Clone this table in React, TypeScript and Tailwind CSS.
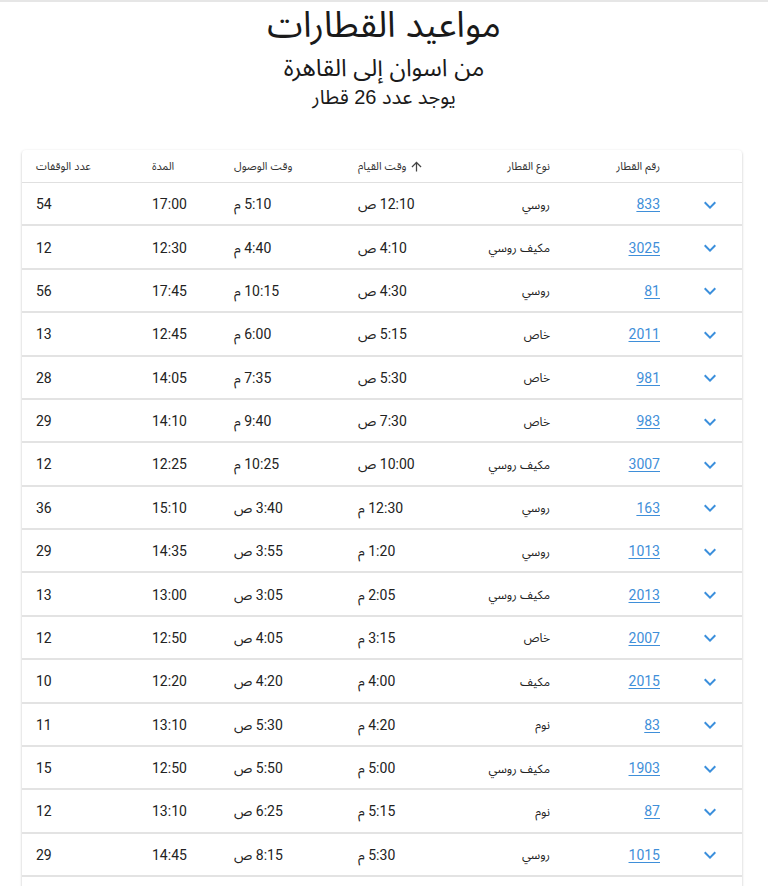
import React from "react";

type Row = [string, string, string, string, string, string];

const rows: Row[] = [
  ["833", "روسي", "12:10 ص", "5:10 م", "17:00", "54"],
  ["3025", "مكيف روسي", "4:10 ص", "4:40 م", "12:30", "12"],
  ["81", "روسي", "4:30 ص", "10:15 م", "17:45", "56"],
  ["2011", "خاص", "5:15 ص", "6:00 م", "12:45", "13"],
  ["981", "خاص", "5:30 ص", "7:35 م", "14:05", "28"],
  ["983", "خاص", "7:30 ص", "9:40 م", "14:10", "29"],
  ["3007", "مكيف روسي", "10:00 ص", "10:25 م", "12:25", "12"],
  ["163", "روسي", "12:30 م", "3:40 ص", "15:10", "36"],
  ["1013", "روسي", "1:20 م", "3:55 ص", "14:35", "29"],
  ["2013", "مكيف روسي", "2:05 م", "3:05 ص", "13:00", "13"],
  ["2007", "خاص", "3:15 م", "4:05 ص", "12:50", "12"],
  ["2015", "مكيف", "4:00 م", "4:20 ص", "12:20", "10"],
  ["83", "نوم", "4:20 م", "5:30 ص", "13:10", "11"],
  ["1903", "مكيف روسي", "5:00 م", "5:50 ص", "12:50", "15"],
  ["87", "نوم", "5:15 م", "6:25 ص", "13:10", "12"],
  ["1015", "روسي", "5:30 م", "8:15 ص", "14:45", "29"],
  ["2009", "خاص", "6:15 م", "7:05 ص", "12:50", "12"],
  ["89", "روسي", "7:00 م", "10:20 ص", "15:20", "30"],
];

const Chevron = () => (
  <svg width="24" height="24" viewBox="0 0 24 24" fill="#3b8fdc">
    <path d="M7.41 8.59 12 13.17l4.59-4.58L18 10l-6 6-6-6 1.41-1.41z" />
  </svg>
);

const ArrowUp = () => (
  <svg width="15" height="15" viewBox="0 0 24 24" fill="#444">
    <path d="M4 12l1.41 1.41L11 7.83V20h2V7.83l5.58 5.59L20 12l-8-8-8 8z" />
  </svg>
);

const grid = "grid grid-cols-[66px_110px_106px_118px_124px_81px_115px]";
const arial = { fontFamily: "'Liberation Sans', 'Noto Sans Arabic', sans-serif" };
const roboto = { fontFamily: "Roboto, 'Noto Sans Arabic', sans-serif" };

export default function App() {
  return (
    <div className="min-h-[886px] bg-white" style={roboto}>
      <div className="h-[2px] bg-[#e6e6e6]" />
      <div dir="rtl" className="flex flex-col items-center text-[#1a1a1a]" style={arial}>
        <h1 className="text-[36px] leading-[46px] mt-[0px]">مواعيد القطارات</h1>
        <h2 className="text-[24px] leading-[32px] mt-[4px]">من اسوان إلى القاهرة</h2>
        <h3 className="text-[20px] leading-[26px] mt-[0px]">يوجد عدد 26 قطار</h3>
      </div>
      <div className="pl-[22px] pr-[26px] mt-[40px]">
        <div dir="rtl" className="bg-white shadow-[0_1px_3px_rgba(0,0,0,0.2),0_1px_1px_rgba(0,0,0,0.12)] rounded-[4px]">
          <div className={`${grid} h-[33px] items-center border-b border-[#e0e0e0] text-[11px] text-[#333]`} style={arial}>
            <div />
            <div className="text-right pr-[16px]">رقم القطار</div>
            <div className="text-right pr-[16px]">نوع القطار</div>
            <div className="flex items-center justify-end pl-[16px] gap-[3px]">
              <ArrowUp />
              <span>وقت القيام</span>
            </div>
            <div className="text-left pl-[16px]">وقت الوصول</div>
            <div className="text-left pl-[15px]">المدة</div>
            <div className="text-left pl-[14px]">عدد الوقفات</div>
          </div>
          {rows.map((r, i) => (
            <div key={i} className={`${grid} h-[43.375px] pt-[2px] items-center border-b-2 border-[#e3e3e3] text-[14px] text-[#222]`}>
              <div className="flex justify-center pl-[2px]">
                <Chevron />
              </div>
              <div className="text-right pr-[16px]">
                <span className="text-[#3f8fd9] underline underline-offset-[2px]">{r[0]}</span>
              </div>
              <div className="text-right pr-[16px] text-[12px]" style={arial}>{r[1]}</div>
              <div className="text-left pl-[16px]">{r[2]}</div>
              <div className="text-left pl-[16px]">{r[3]}</div>
              <div className="text-left pl-[15px]">{r[4]}</div>
              <div className="text-left pl-[14px]">{r[5]}</div>
            </div>
          ))}
        </div>
      </div>
    </div>
  );
}
